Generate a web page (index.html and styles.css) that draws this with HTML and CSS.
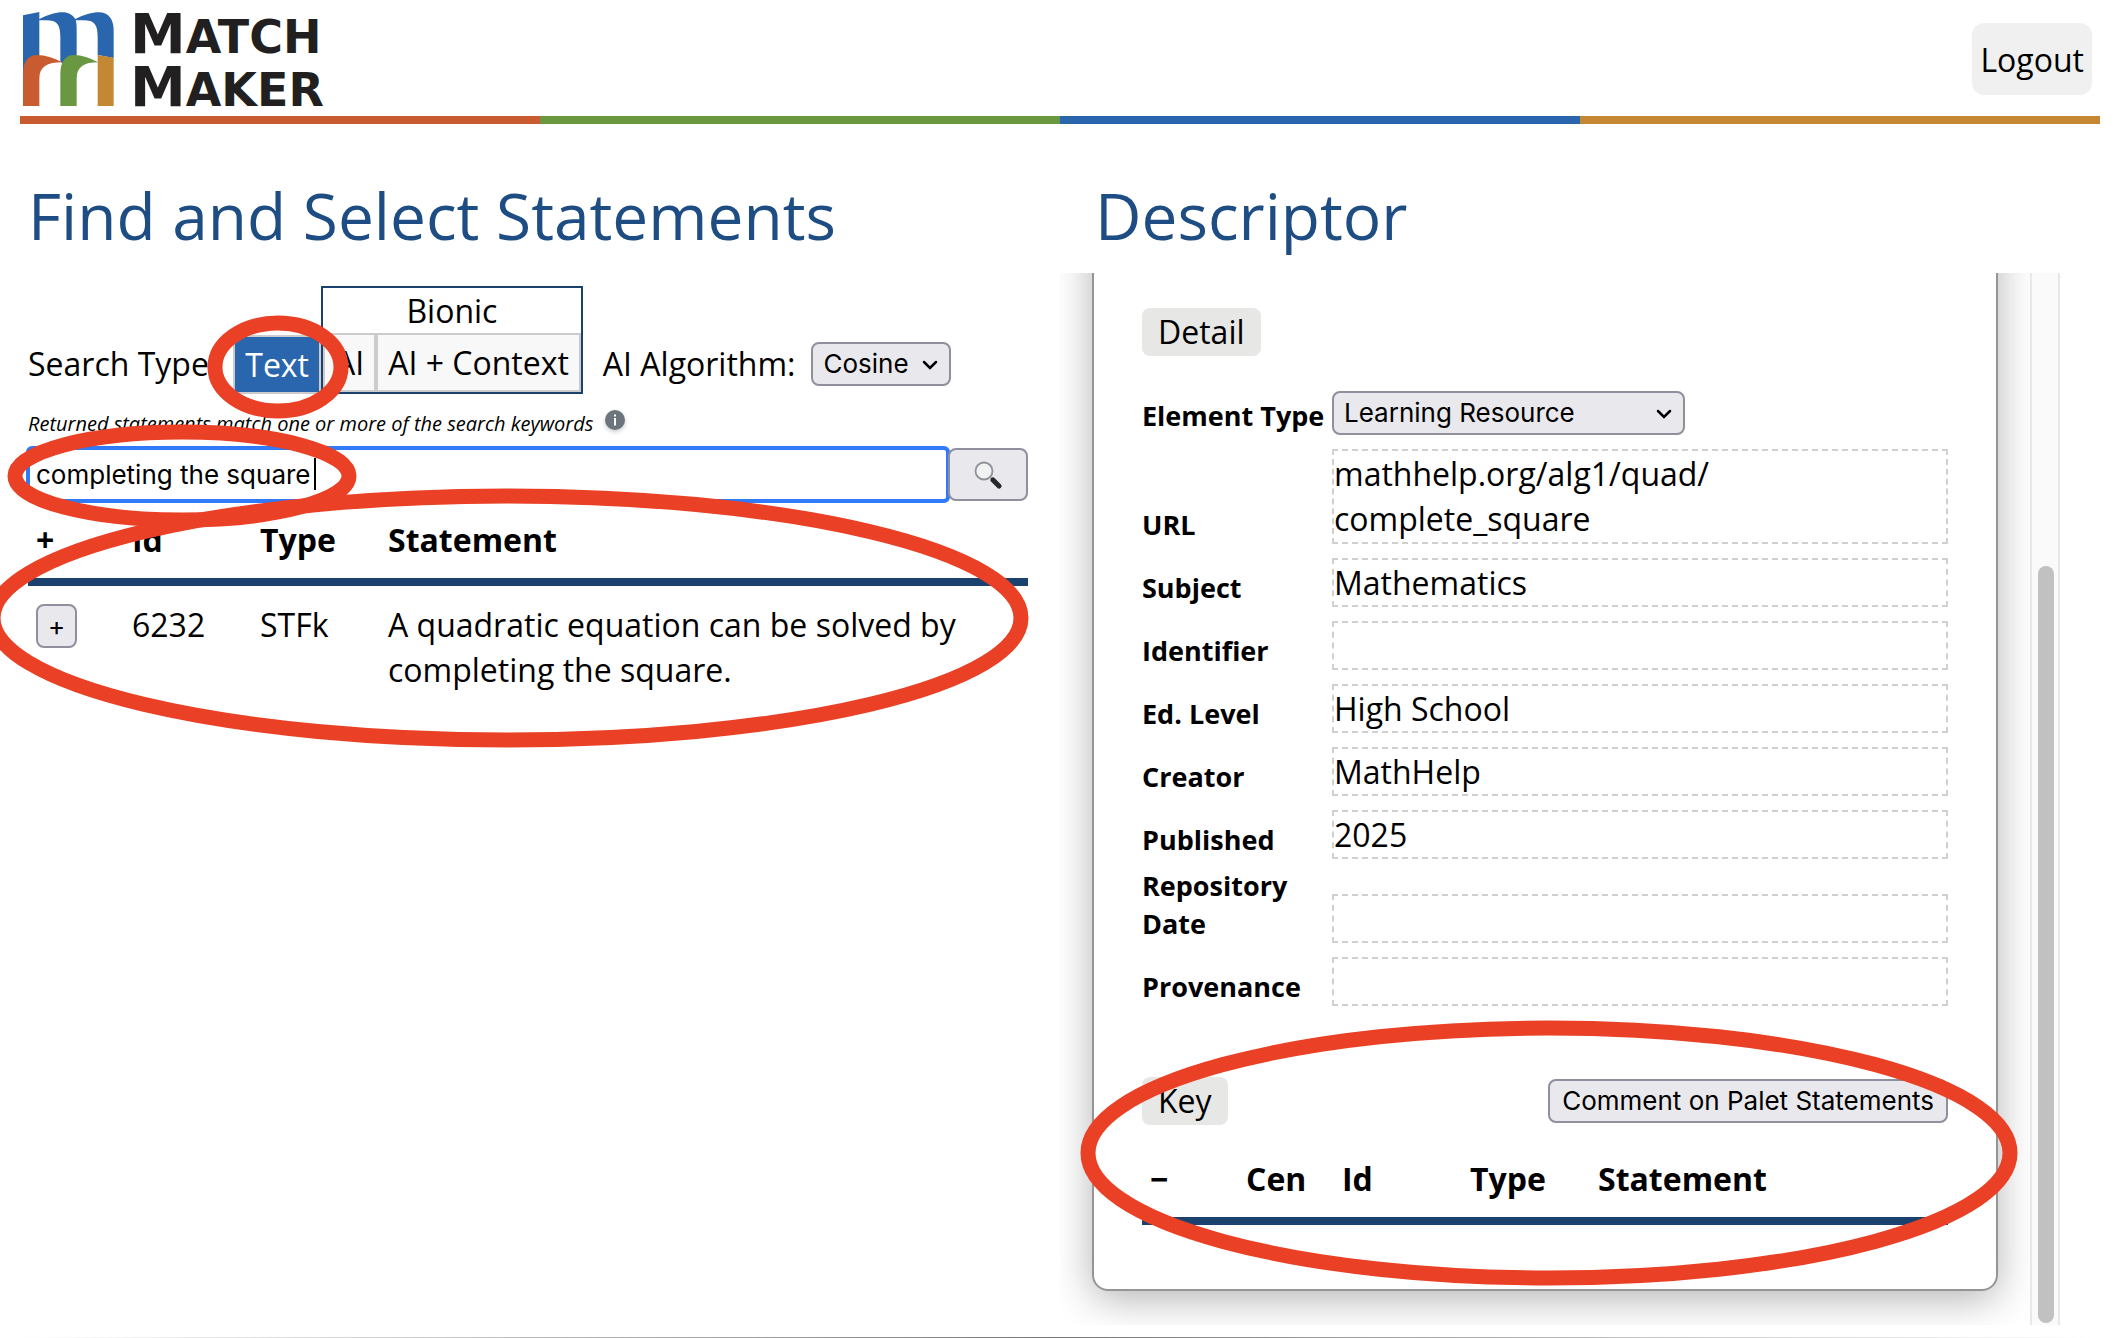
FILE: index.html
```html
<!DOCTYPE html>
<html lang="en">
<head>
<meta charset="utf-8">
<title>Match Maker</title>
<link rel="stylesheet" href="styles.css">
</head>
<body>
<header class="topbar">
  <div class="logo">
    <svg width="94" height="94" viewBox="0 0 94 94" aria-hidden="true">
      <g transform="translate(-20 -12) scale(.33333)">
        <path fill="#2a66ad" d="M69 46 118 36V57C145 44 166 37 188 37 205 37 217 44 226 57 252 44 276 37 296 37 326 37 341 58 341 92V174L293 165V112C293 74 284 61 250 61H227C230 70 230 80 230 92V167L186 190 181 184V112C181 74 172 61 138 61H118V170L69 225Z"/>
        <path fill="#c95b30" d="M69 318V222C69 185 84 165 112 165 136 165 160 174 187 187 141 187 118 200 118 236V318Z"/>
        <path fill="#6a9741" d="M181 318V222C181 185 196 165 222 165 246 165 268 174 295 187 252 187 230 200 230 236V318Z"/>
        <path fill="#c48733" d="M293 165 341 173V318H293Z"/>
      </g>
    </svg>
    <div class="wordmark">
      <div>M<span>ATCH</span></div>
      <div>M<span>AKER</span></div>
    </div>
  </div>
  <button class="logout" type="button">Logout</button>
</header>
<div class="stripe"><span class="s1"></span><span class="s2"></span><span class="s3"></span><span class="s4"></span></div>

<main class="columns">
  <section class="finder">
    <h1>Find and Select Statements</h1>
    <div class="search-type">
      <span class="caption">Search Type:</span>
      <button class="mode active" type="button">Text</button>
      <div class="bionic">
        <div class="bionic-title">Bionic</div>
        <div class="bionic-modes">
          <button class="mode" type="button">AI</button>
          <button class="mode" type="button">AI + Context</button>
        </div>
      </div>
      <label class="caption algorithm" for="algo">AI Algorithm:</label>
      <span class="select caption">
        <select id="algo" class="control cosine"><option>Cosine</option></select>
        <svg class="chevron" width="16" height="10" viewBox="0 0 16 10"><path d="M2 2l6 6 6-6"/></svg>
      </span>
    </div>
    <p class="hint"><label for="q">Returned statements match one or more of the search keywords</label>
      <svg class="info" width="20" height="20" viewBox="0 0 20 20"><circle cx="10" cy="10" r="10" fill="#6c757d"/><path d="M9 8h2v7.500H9zM9 4.500h2v2H9z" fill="#fff"/></svg>
    </p>
    <form class="search">
      <input id="q" type="text" value="completing the square">
      <span class="caret"></span>
      <button class="control go" type="button" aria-label="Search">
        <svg width="28" height="28" viewBox="0 0 28 28">
          <path d="M17 17l3 3" stroke="#777" stroke-width="2"/>
          <path d="M19 19l6 6" stroke="#25282c" stroke-width="5" stroke-linecap="round"/>
          <circle cx="10" cy="10" r="8.500" fill="#f1f3f3" stroke="#8d9296" stroke-width="1.800"/>
        </svg>
      </button>
    </form>
    <table class="statements">
      <colgroup><col class="narrow"><col class="mid"><col class="mid"><col></colgroup>
      <thead><tr><th>+</th><th>Id</th><th>Type</th><th>Statement</th></tr></thead>
      <tbody><tr>
        <td><button class="control add" type="button">+</button></td>
        <td>6232</td><td>STFk</td>
        <td>A quadratic equation can be solved by completing the square.</td>
      </tr></tbody>
    </table>
  </section>

  <section class="descriptor">
    <h1>Descriptor</h1>
    <div class="scroller">
      <div class="viewport">
        <div class="panel">
          <h2 class="badge">Detail</h2>
          <form class="fields">
            <label for="f0">Element Type</label>
            <span class="select wide">
              <select id="f0" class="control"><option>Learning Resource</option></select>
              <svg class="chevron" width="16" height="10" viewBox="0 0 16 10"><path d="M2 2l6 6 6-6"/></svg>
            </span>
            <label for="f1">URL</label><textarea id="f1" rows="2" spellcheck="false">mathhelp.org/alg1/quad/
complete_square</textarea>
            <label for="f2">Subject</label><input id="f2" type="text" value="Mathematics">
            <label for="f3">Identifier</label><input id="f3" type="text">
            <label for="f4">Ed. Level</label><input id="f4" type="text" value="High School">
            <label for="f5">Creator</label><input id="f5" type="text" value="MathHelp">
            <label for="f6">Published</label><input id="f6" type="text" value="2025">
            <label for="f7">Repository Date</label><input id="f7" type="text">
            <label for="f8">Provenance</label><input id="f8" type="text">
          </form>
          <div class="key-row">
            <h2 class="badge">Key</h2>
            <button class="control comment" type="button">Comment on Palet Statements</button>
          </div>
          <table class="statements">
            <colgroup><col class="narrow"><col class="narrow"><col class="mid"><col class="mid"><col></colgroup>
            <thead><tr><th>−</th><th>Cen</th><th>Id</th><th>Type</th><th>Statement</th></tr></thead>
          </table>
        </div>
      </div>
      <div class="track"><div class="thumb"></div></div>
    </div>
  </section>
</main>
<hr class="rule">

<svg class="marks" aria-hidden="true">
  <ellipse cx="278" cy="367" rx="63" ry="44"/>
  <ellipse cx="182" cy="476" rx="167" ry="44"/>
  <ellipse cx="507" cy="618" rx="514" ry="122"/>
  <ellipse cx="1549" cy="1153" rx="461" ry="125"/>
</svg>
</body>
</html>
```
FILE: styles.css
```css
* { box-sizing: border-box; }

body {
  margin: 0;
  min-height: 100vh;
  position: relative;
  display: flex;
  flex-direction: column;
  background: #fff;
  color: #000;
  font: 32px/45px "Open Sans", "Noto Sans", sans-serif;
}

button, input, select, textarea { font: inherit; color: inherit; margin: 0; }

/* Header */
.topbar {
  display: flex;
  justify-content: space-between;
  align-items: flex-start;
  height: 116px;
  padding: 12px 24px 0 20px;
}
.logo { display: flex; gap: 16px; }
.wordmark {
  margin-top: -5px;
  font: 700 56px/53px "DejaVu Sans", sans-serif;
  color: #221f20;
}
.wordmark span { font-size: 46px; line-height: 1px; }
.logout {
  margin-top: 11px;
  height: 72px;
  padding: 0 8px;
  border: 0;
  border-radius: 12px;
  background: #f0f0f0;
}
.stripe { display: flex; height: 8px; margin: 0 16px 0 20px; }
.stripe span { flex: 1; }
.s1 { background: #c95b30; }
.s2 { background: #6a9741; }
.s3 { background: #2a66ad; }
.s4 { background: #c48733; }

/* Two columns */
.columns {
  flex: 1;
  display: grid;
  grid-template-columns: minmax(0, 1fr) minmax(0, 1fr);
  gap: 32px;
  padding: 47px 56px 0 28px;
}
h1 {
  margin: 0 0 12px;
  font-size: 64px;
  line-height: 90px;
  font-weight: 400;
  color: #1e4d83;
}

.control {
  height: 44px;
  border: 2px solid #8f8f9d;
  border-radius: 8px;
  background: #e9e9ed;
  font: 26px/40px Inter, "Liberation Sans", sans-serif;
}

/* Search */
.search-type { display: flex; align-items: flex-end; margin-top: 25px; }
.caption { margin-bottom: 8px; }
.mode {
  padding: 5px 10px;
  border: 2px solid #ccc;
  background: #f8f8f8;
}
.search-type > .mode { margin-left: 16px; }
.mode.active { background: #2a66ad; color: #fff; }
.bionic { border: 2px solid #1b426f; }
.bionic-title { text-align: center; }
.bionic-modes { display: flex; }
.algorithm { margin-left: 20px; margin-right: 16px; }

.select { position: relative; display: flex; }
.select select { appearance: none; padding: 0 10px; }
.cosine { width: 140px; }
.chevron {
  position: absolute;
  right: 13px;
  top: 18px;
  fill: none;
  stroke: #000;
  stroke-width: 2.5;
  stroke-linecap: round;
}

.hint {
  display: flex;
  gap: 12px;
  margin: 16px 0 10px;
  font-size: 20px;
  line-height: 28px;
  font-style: italic;
}
.info { filter: drop-shadow(0 2px 2px rgba(0, 0, 0, .2)); }

.search { position: relative; display: flex; }
.search input {
  flex: 1;
  min-width: 0;
  height: 53px;
  padding: 0 8px;
  border: 0;
  border-radius: 4px;
  outline: 4px solid #3079f7;
  outline-offset: -2px;
  font: 26px/40px Inter, "Liberation Sans", sans-serif;
}
.caret {
  position: absolute;
  left: 286px;
  top: 10px;
  width: 2px;
  height: 32px;
  background: #000;
}
.go {
  width: 80px;
  height: 53px;
  display: flex;
  align-items: center;
  justify-content: center;
  padding: 0;
}

/* Statement tables */
.statements { width: 100%; border-collapse: collapse; table-layout: fixed; }
.narrow { width: 96px; }
.mid { width: 128px; }
.statements th {
  padding: 16px 8px;
  border-bottom: 8px solid #1b426f;
  text-align: left;
  font-weight: 700;
}
.statements td { padding: 16px 8px; vertical-align: top; }
.add { display: block; width: 41px; padding: 0; margin-top: 2px; }

/* Descriptor */
.descriptor { display: flex; flex-direction: column; }
.descriptor h1 { padding-left: 35px; }
.scroller { flex: 1; display: flex; margin-bottom: 12px; }
.viewport { flex: 1; overflow: hidden; padding: 0 32px; }
.panel {
  margin-top: -60px;
  padding: 93px 48px 64px;
  border: 2px solid #959595;
  border-radius: 16px;
  box-shadow: 0 8px 40px rgba(0, 0, 0, .3);
}
.track {
  width: 30px;
  display: grid;
  grid-template-rows: 293fr 757fr;
  padding: 0 4px 2px 6px;
  border: solid #e8e8e8;
  border-width: 0 2px;
  background: #fafafa;
}
.thumb { grid-row: 2; border-radius: 8px; background: #c1c1c1; }

.badge {
  width: fit-content;
  margin: 0;
  padding: 0 16px;
  border-radius: 8px;
  background: #e7e7e5;
  font-size: 32px;
  line-height: 48px;
  font-weight: 400;
}
.fields {
  display: grid;
  grid-template-columns: 190px minmax(0, 1fr);
  row-gap: 8px;
  align-items: end;
  margin: 35px 0 71px;
}
.fields label { font-size: 27px; line-height: 38px; font-weight: 700; }
.wide { width: 353px; }
.wide select { width: 100%; }
.fields input, .fields textarea {
  display: block;
  width: 100%;
  margin-top: 6px;
  padding: 0;
  border: 2px dashed #d0d0d0;
  background: none;
  resize: none;
  overflow: hidden;
}
.fields textarea { height: 95px; }
.fields input { height: 49px; }
.key-row { display: flex; justify-content: space-between; align-items: center; margin-bottom: 15px; }
.comment { padding: 0 12px; }

.rule {
  width: calc(100% - 40px);
  height: 1px;
  margin: 0 auto;
  border: 0;
  background: linear-gradient(90deg, transparent, #777 50%, transparent);
}

/* Callout ellipses over the page */
.marks {
  position: absolute;
  left: 0;
  top: 0;
  width: 100%;
  height: 100%;
  pointer-events: none;
  fill: none;
  stroke: #ea4025;
  stroke-width: 15px;
}
```
